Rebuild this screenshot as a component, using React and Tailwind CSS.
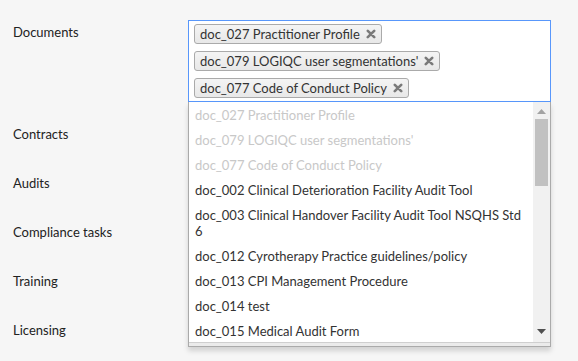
import React from 'react';

const labels = ['Contracts', 'Audits', 'Compliance tasks', 'Training', 'Licensing'];

const selected = [
  'doc_027 Practitioner Profile',
  "doc_079 LOGIQC user segmentations'",
  'doc_077 Code of Conduct Policy',
];

const options = [
  'doc_002 Clinical Deterioration Facility Audit Tool',
  'doc_003 Clinical Handover Facility Audit Tool NSQHS Std 6',
  'doc_012 Cyrotherapy Practice guidelines/policy',
  'doc_013 CPI Management Procedure',
  'doc_014 test',
  'doc_015 Medical Audit Form',
];

const Tag = ({ label }) => (
  <div className="inline-flex items-center h-[20px] pl-[5px] pr-[5px] rounded-[3px] border border-[#aaaaaa] bg-gradient-to-b from-[#f4f4f4] to-[#e8e8e8] text-[13px] leading-[18px] text-[#333]">
    <span>{label}</span>
    <svg width="10" height="10" viewBox="0 0 10 10" className="ml-[6px]">
      <path d="M1.8 1.8 L8.2 8.2 M8.2 1.8 L1.8 8.2" stroke="#7a7a7a" strokeWidth="2.6" strokeLinecap="round" />
    </svg>
  </div>
);

const Scrollbar = () => (
  <div className="w-[17px] bg-[#f1f1f1] flex flex-col items-center">
    <svg width="9" height="5" viewBox="0 0 9 5" className="mt-[7px]">
      <path d="M0 5 L4.5 0 L9 5 Z" fill="#a3a3a3" />
    </svg>
    <div className="mt-[5px] w-[13px] h-[67px] bg-[#c1c1c1]" />
    <div className="flex-1" />
    <svg width="9" height="5" viewBox="0 0 9 5" className="mb-[8px]">
      <path d="M0 0 L9 0 L4.5 5 Z" fill="#505050" />
    </svg>
  </div>
);

export default function App() {
  return (
    <div
      className="w-[578px] h-[361px] bg-[#f6f6f6] overflow-hidden flex text-[13px] text-[#222]"
      style={{ fontFamily: 'Lato, "Open Sans", sans-serif' }}
    >
      {/* Labels */}
      <div className="w-[188px] pl-[13px] pt-[20px] shrink-0">
        <div className="h-[102px] pt-[4px] leading-[16px]">Documents</div>
        {labels.map((l) => (
          <div key={l} className="h-[49px] pt-[4px] leading-[16px]">{l}</div>
        ))}
      </div>

      {/* Select */}
      <div className="pt-[20px]">
        <div className="relative w-[363px]">
          <div className="border border-[#5897fb] bg-white px-[5px] pt-[3px] pb-[3px] flex flex-col items-start gap-[7px]">
            {selected.map((s) => (
              <Tag key={s} label={s} />
            ))}
          </div>

          {/* Dropdown menu */}
          <div className="absolute left-0 top-full w-[363px] bg-white border border-t-0 border-[#aaaaaa] shadow-[0_4px_5px_rgba(0,0,0,0.15)]">
            <div className="flex h-[240px]">
              <ul className="flex-1 overflow-hidden pl-[6px] pr-[4px]">
                {selected.map((s) => (
                  <li key={s} className="py-[4.5px] leading-[16px] text-[#c8c8c8]">{s}</li>
                ))}
                {options.map((o) => (
                  <li key={o} className="py-[4.5px] leading-[16px] text-[#333]">{o}</li>
                ))}
              </ul>
              <Scrollbar />
            </div>
            <div className="h-[4px] bg-[#ebebeb] border-t border-[#cfcfcf]" />
          </div>
        </div>
      </div>
    </div>
  );
}
